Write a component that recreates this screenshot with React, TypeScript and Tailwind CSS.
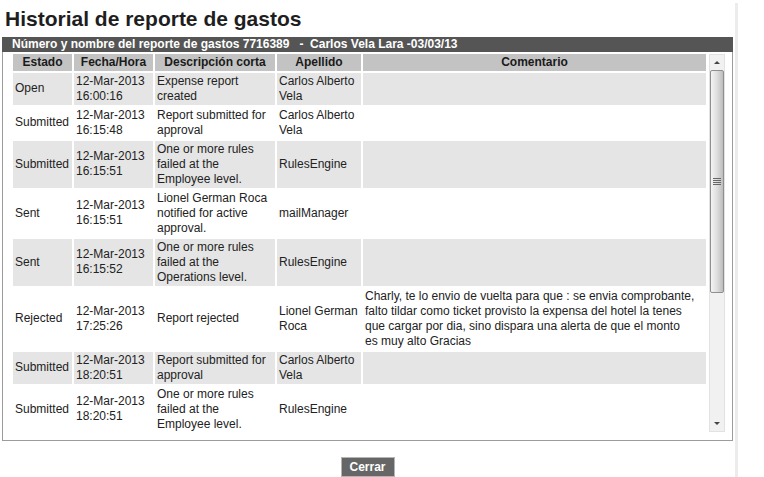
const rows = [
  { estado: 'Open', fecha: ['12-Mar-2013', '16:00:16'], desc: ['Expense report', 'created'], apellido: ['Carlos Alberto', 'Vela'], comentario: [] as string[] },
  { estado: 'Submitted', fecha: ['12-Mar-2013', '16:15:48'], desc: ['Report submitted for', 'approval'], apellido: ['Carlos Alberto', 'Vela'], comentario: [] },
  { estado: 'Submitted', fecha: ['12-Mar-2013', '16:15:51'], desc: ['One or more rules', 'failed at the', 'Employee level.'], apellido: ['RulesEngine'], comentario: [] },
  { estado: 'Sent', fecha: ['12-Mar-2013', '16:15:51'], desc: ['Lionel German Roca', 'notified for active', 'approval.'], apellido: ['mailManager'], comentario: [] },
  { estado: 'Sent', fecha: ['12-Mar-2013', '16:15:52'], desc: ['One or more rules', 'failed at the', 'Operations level.'], apellido: ['RulesEngine'], comentario: [] },
  {
    estado: 'Rejected',
    fecha: ['12-Mar-2013', '17:25:26'],
    desc: ['Report rejected'],
    apellido: ['Lionel German', 'Roca'],
    comentario: [
      'Charly, te lo envio de vuelta para que : se envia comprobante,',
      'falto tildar como ticket provisto la expensa del hotel la tenes',
      'que cargar por dia, sino dispara una alerta de que el monto',
      'es muy alto Gracias',
    ],
  },
  { estado: 'Submitted', fecha: ['12-Mar-2013', '18:20:51'], desc: ['Report submitted for', 'approval'], apellido: ['Carlos Alberto', 'Vela'], comentario: [] },
  { estado: 'Submitted', fecha: ['12-Mar-2013', '18:20:51'], desc: ['One or more rules', 'failed at the', 'Employee level.'], apellido: ['RulesEngine'], comentario: [] },
];

function Lines({ lines }: { lines: string[] }) {
  return (
    <>
      {lines.map((l, i) => (
        <div key={i} className="whitespace-nowrap">
          {l}
        </div>
      ))}
    </>
  );
}

function Scrollbar() {
  return (
    <div className="flex h-[378px] w-[16px] flex-col border border-[#e2e2e2] bg-[#f1f1f1]">
      <div className="flex h-[15px] items-center justify-center">
        <div className="h-0 w-0 border-x-[3px] border-b-[3px] border-x-transparent border-b-[#444]" />
      </div>
      <div className="flex h-[223px] items-center justify-center rounded-[2px] border border-[#8f8f8f] bg-gradient-to-r from-[#f4f4f4] via-[#dedede] to-[#bdbdbd]">
        <svg width="8" height="7" viewBox="0 0 8 7">
          <path d="M0 0.5H8M0 2.5H8M0 4.5H8M0 6.5H8" stroke="#666" strokeWidth="1" />
        </svg>
      </div>
      <div className="flex-1" />
      <div className="flex h-[15px] items-center justify-center">
        <div className="h-0 w-0 border-x-[3px] border-t-[3px] border-x-transparent border-t-[#444]" />
      </div>
    </div>
  );
}

export default function App() {
  return (
    <div className="flex h-[477px] w-[764px] overflow-hidden bg-white font-['Liberation_Sans',Arial,sans-serif] text-[12px] leading-[15px] text-[#222]">
      <div className="flex w-[735px] flex-col">
        <h1 className="ml-[5px] mt-[5px] h-[32px] text-[21px] font-bold leading-[27px] text-[#1e1e1e]">
          Historial de reporte de gastos
        </h1>
        <div className="mx-[2px] h-[15px] whitespace-pre bg-[#555] pl-[10px] text-[12px] font-bold leading-[15px] text-white">
          {'Número y nombre del reporte de gastos 7716389   -  Carlos Vela Lara -03/03/13'}
        </div>
        <div className="mx-[2px] flex h-[390px] border-x border-b border-[#9c9c9c] pl-[8px]">
          <div className="h-[380px] overflow-hidden">
            <table className="w-[697px] table-fixed border-separate border-spacing-[2px]">
              <colgroup>
                <col className="w-[59px]" />
                <col className="w-[79px]" />
                <col className="w-[120px]" />
                <col className="w-[84px]" />
                <col className="w-[343px]" />
              </colgroup>
              <thead>
                <tr className="bg-[#c3c3c3] font-bold text-[#1a1a1a]">
                  <th className="h-[17px] p-0 text-center font-bold">Estado</th>
                  <th className="p-0 text-center font-bold">Fecha/Hora</th>
                  <th className="p-0 text-center font-bold">Descripción corta</th>
                  <th className="p-0 text-center font-bold">Apellido</th>
                  <th className="p-0 text-center font-bold">Comentario</th>
                </tr>
              </thead>
              <tbody>
                {rows.map((r, i) => (
                  <tr key={i} className={i % 2 === 0 ? 'bg-[#e5e5e5]' : 'bg-white'}>
                    <td className="px-[2px] py-[1px] align-middle">{r.estado}</td>
                    <td className="px-[2px] py-[1px] align-middle">
                      <Lines lines={r.fecha} />
                    </td>
                    <td className="px-[2px] py-[1px] align-middle">
                      <Lines lines={r.desc} />
                    </td>
                    <td className="px-[2px] py-[1px] align-middle">
                      <Lines lines={r.apellido} />
                    </td>
                    <td className="px-[2px] py-[1px] align-middle">
                      <Lines lines={r.comentario} />
                    </td>
                  </tr>
                ))}
              </tbody>
            </table>
          </div>
          <div className="ml-[1px] pt-[2px]">
            <Scrollbar />
          </div>
        </div>
        <div className="mt-[16px] flex justify-center">
          <button className="h-[20px] w-[54px] border border-[#b5b5b5] bg-[#666] text-[12px] font-bold leading-[18px] text-white">
            Cerrar
          </button>
        </div>
      </div>
      <div className="mt-[3px] w-[3px] bg-[#ececec]" />
    </div>
  );
}
